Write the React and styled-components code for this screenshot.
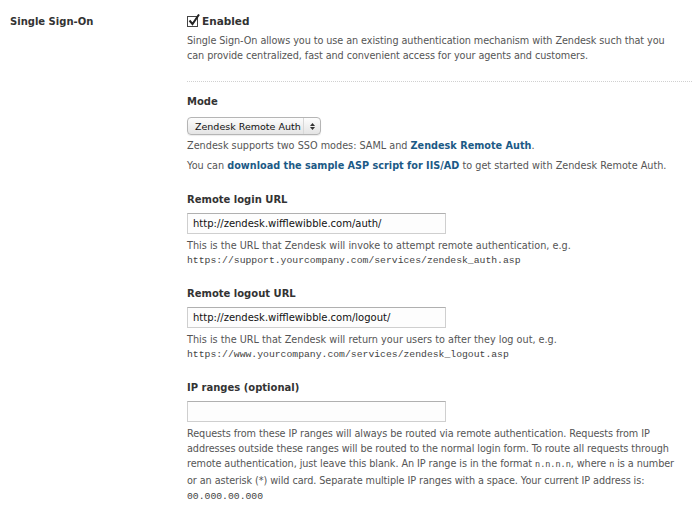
import styled, { createGlobalStyle } from "styled-components"

const GlobalStyle = createGlobalStyle`
  body {
    margin: 0;
    background: #fff;
    font-family: "DejaVu Sans", "Liberation Sans", sans-serif;
    font-size: 9.7px;
    color: #555;
  }
`

const Page = styled.div`
  display: grid;
  grid-template-columns: 187px 1fr;
  padding-top: 14px;
`

const SideLabel = styled.div`
  padding-left: 10px;
  font-weight: bold;
  color: #333;
  font-size: 10px;
  line-height: 15px;
`

const Content = styled.div`
  display: flex;
  flex-direction: column;
  padding-right: 8px;
`

const CheckRow = styled.label`
  display: flex;
  align-items: center;
  gap: 4px;
  font-weight: bold;
  color: #333;
  font-size: 10.5px;
  line-height: 15px;
`

const CheckBox = styled.span`
  width: 11px;
  height: 11px;
  border: 1px solid #444;
  box-sizing: border-box;
  position: relative;
  background: #fff;
  svg {
    position: absolute;
    left: 0;
    top: -3px;
  }
`

const Text = styled.p`
  margin: ${p => p.$top || 0}px 0 0;
  line-height: ${p => p.$lh || 15}px;
  white-space: ${p => (p.$lines ? "nowrap" : "normal")};
  letter-spacing: ${p => (p.$lines ? "-0.08px" : "0")};
`

const Divider = styled.hr`
  border: 0;
  border-top: 1px dotted #d0d0d0;
  margin: 18px 0 0;
`

const FieldLabel = styled.div`
  font-weight: bold;
  color: #333;
  font-size: 10px;
  line-height: 15px;
  margin-top: ${p => p.$top}px;
`

const Select = styled.div`
  display: flex;
  align-items: center;
  align-self: flex-start;
  justify-content: space-between;
  width: 134px;
  height: 18px;
  margin-top: 8px;
  padding: 0 5px 0 7px;
  box-sizing: border-box;
  border: 1px solid #b5b5b5;
  border-radius: 4px;
  background: linear-gradient(#fdfdfd, #e4e4e4);
  color: #111;
  font-size: 9.5px;
  white-space: nowrap;
  box-shadow: 0 1px 1px rgba(0, 0, 0, 0.08);
`

const Arrows = styled.span`
  display: flex;
  flex-direction: column;
  justify-content: center;
  gap: 1px;
  height: 100%;
  padding-left: 6px;
  border-left: 1px solid #d8d8d8;
`

const Input = styled.input`
  display: block;
  width: 259px;
  height: 21px;
  margin-top: 6px;
  padding: 0 5px;
  box-sizing: border-box;
  border: 1px solid #cfcfcf;
  border-top-color: #b0b0b0;
  background: #fdfdfd;
  font-family: inherit;
  font-size: 10px;
  color: #111;
  outline: none;
`

const Link = styled.a`
  color: #1c5a86;
  font-weight: bold;
  text-decoration: none;
`

const Mono = styled.span`
  font-family: "Liberation Mono", monospace;
  font-size: ${p => p.$size || 9.75}px;
  letter-spacing: 0;
  color: #444;
`

const Check = () => (
  <CheckBox>
    <svg width="12" height="12" viewBox="0 0 12 12">
      <path d="M1.5 6.5 L4.5 10 L11 0.5" fill="none" stroke="#222" strokeWidth="2" />
    </svg>
  </CheckBox>
)

const Field = ({ label, top, value, children }) => (
  <>
    <FieldLabel $top={top}>{label}</FieldLabel>
    <Input defaultValue={value} />
    {children}
  </>
)

export default function App() {
  return (
    <>
      <GlobalStyle />
      <Page>
        <SideLabel>Single Sign-On</SideLabel>
        <Content>
          <CheckRow>
            <Check />
            Enabled
          </CheckRow>
          <Text $top={4} $lines>
            Single Sign-On allows you to use an existing authentication mechanism with Zendesk such that you
            <br />
            can provide centralized, fast and convenient access for your agents and customers.
          </Text>
          <Divider />
          <FieldLabel $top={12}>Mode</FieldLabel>
          <Select>
            Zendesk Remote Auth
            <Arrows>
              <svg width="5" height="3" viewBox="0 0 5 3"><path d="M0 3 L2.5 0 L5 3Z" fill="#333" /></svg>
              <svg width="5" height="3" viewBox="0 0 5 3"><path d="M0 0 L2.5 3 L5 0Z" fill="#333" /></svg>
            </Arrows>
          </Select>
          <Text $top={3}>
            Zendesk supports two SSO modes: SAML and <Link href="#">Zendesk Remote Auth</Link>.
          </Text>
          <Text $top={5}>
            You can <Link href="#">download the sample ASP script for IIS/AD</Link> to get started with Zendesk Remote Auth.
          </Text>

          <Field label="Remote login URL" top={19} value="http://zendesk.wifflewibble.com/auth/">
            <Text $top={5} $lh={14}>
              This is the URL that Zendesk will invoke to attempt remote authentication, e.g.
              <br />
              <Mono>https://support.yourcompany.com/services/zendesk_auth.asp</Mono>
            </Text>
          </Field>

          <Field label="Remote logout URL" top={18} value="http://zendesk.wifflewibble.com/logout/">
            <Text $top={5} $lh={14}>
              This is the URL that Zendesk will return your users to after they log out, e.g.
              <br />
              <Mono>https://www.yourcompany.com/services/zendesk_logout.asp</Mono>
            </Text>
          </Field>

          <Field label="IP ranges (optional)" top={18} value="">
            <Text $top={4} $lines>
              Requests from these IP ranges will always be routed via remote authentication. Requests from IP
              <br />
              addresses outside these ranges will be routed to the normal login form. To route all requests through
              <br />
              remote authentication, just leave this blank. An IP range is in the format <Mono $size={8.5}>n.n.n.n</Mono>,
              where <Mono $size={8.5}>n</Mono> is a number
              <br />
              or an asterisk (*) wild card. Separate multiple IP ranges with a space. Your current IP address is:
              <br />
              <Mono>00.000.00.000</Mono>
            </Text>
          </Field>
        </Content>
      </Page>
    </>
  )
}
